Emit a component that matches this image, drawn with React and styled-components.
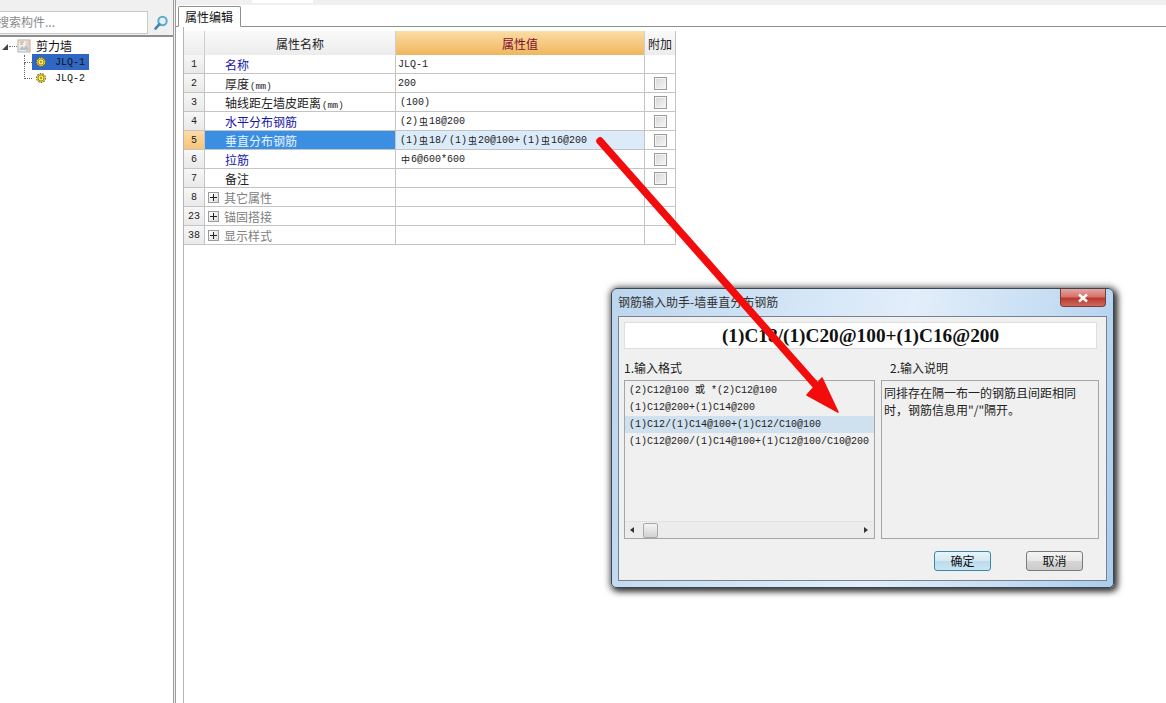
import React from "react";
import styled, { createGlobalStyle } from "styled-components";

const CJK = `"Noto Sans CJK SC", "Liberation Sans", sans-serif`;
const MONO = `"Liberation Mono", "Noto Sans CJK SC", monospace`;

const Global = createGlobalStyle`
  html, body { margin: 0; padding: 0; background: #fff; }
  body { font-family: ${CJK}; font-size: 12px; color: #111; }
  * { box-sizing: border-box; }
`;

const Page = styled.div`
  position: relative;
  display: flex;
  width: 1166px;
  height: 703px;
  overflow: hidden;
  background: #fff;
`;

/* ---------- left panel ---------- */
const LeftPanel = styled.aside`
  width: 173px;
  height: 100%;
  display: flex;
  flex-direction: column;
  flex: none;
`;
const SearchBar = styled.div`
  height: 37px;
  flex: none;
  display: flex;
  align-items: flex-start;
  padding-top: 11px;
  background: #f0f0f0;
  border-bottom: 2px solid #8e8e8e;
`;
const SearchInput = styled.div`
  width: 158px;
  height: 23px;
  margin-left: -10px;
  padding-left: 6px;
  flex: none;
  background: #fff;
  border: 1px solid #c9c9c9;
  color: #8a8a8a;
  font-size: 12px;
  line-height: 20px;
  white-space: nowrap;
`;
const SearchButton = styled.div`
  flex: 1;
  height: 23px;
  display: flex;
  align-items: center;
  justify-content: center;
  padding-left: 1px;
`;
const Tree = styled.div`
  padding-top: 1px;
`;
const RootNode = styled.div`
  height: 16px;
  display: flex;
  align-items: center;
  padding-left: 2px;
  font-size: 12px;
  line-height: 16px;
`;
const Expander = styled.span`
  width: 0;
  height: 0;
  margin-top: 1px;
  border-style: solid;
  border-width: 0 0 6px 6px;
  border-color: transparent transparent #444 transparent;
  flex: none;
`;
const RootDots = styled.span`
  width: 8px;
  margin: 1px 0 0 1px;
  border-top: 1px dotted #777;
  flex: none;
`;
const RootLabel = styled.span`
  margin-left: 4px;
  color: #111;
`;
const TreeChild = styled.div`
  height: 16px;
  display: flex;
  align-items: center;
  padding-left: 24px;
`;
const Elbow = styled.span`
  width: 8px;
  height: ${(p) => p.$h}px;
  margin-top: ${(p) => -p.$h + 1}px;
  border-left: 1px dotted #666;
  border-bottom: 1px dotted #666;
  flex: none;
`;
const ChildLabel = styled.span`
  width: 57px;
  height: 16px;
  display: flex;
  align-items: center;
  padding-left: 3px;
  gap: 8px;
  background: ${(p) => (p.$selected ? "#2f67c2" : "transparent")};
  font-family: ${MONO};
  font-size: 10px;
  color: #111;
`;

/* ---------- splitter + right ---------- */
const Splitter = styled.div`
  width: 3px;
  flex: none;
  background: #f0f0f0;
  border-left: 1px solid #9c9c9c;
  border-right: 1px solid #9c9c9c;
`;
const RightPanel = styled.main`
  flex: 1;
  display: flex;
  flex-direction: column;
  min-width: 0;
`;
const TopStrip = styled.div`
  height: 5px;
  flex: none;
  background: #f0f0f0;
  padding-left: 76px;
`;
const StripGap = styled.div`
  width: 61px;
  height: 3px;
  background: #fff;
`;
const TabBar = styled.div`
  height: 22px;
  flex: none;
  display: flex;
  align-items: flex-end;
  padding-left: 2px;
  border-bottom: 1px solid #8f8f8f;
`;
const Tab = styled.div`
  width: 63px;
  height: 21px;
  margin-bottom: -1px;
  background: #fff;
  border: 1px solid #8f8f8f;
  border-bottom: 1px solid #fff;
  border-radius: 2px 2px 0 0;
  font-size: 12px;
  line-height: 20px;
  padding-left: 6px;
  color: #111;
`;
const Pane = styled.div`
  flex: 1;
  margin-left: 7px;
  padding-top: 4px;
  border-left: 1px solid #b5b5b5;
`;
const Table = styled.div`
  width: 492px;
  border-right: 1px solid #c4c4c4;
`;
const cols = "20px 191px 249px 31px";
const HeaderRow = styled.div`
  display: grid;
  grid-template-columns: ${cols};
  height: 24px;
`;
const HeadCell = styled.div`
  display: flex;
  align-items: center;
  justify-content: center;
  font-size: 12px;
  border-left: ${(p) => (p.$first ? "none" : "1px solid #cfcfcf")};
  color: ${(p) => (p.$active ? "#7d0f32" : "#222")};
  background: ${(p) =>
    p.$active
      ? "linear-gradient(#fbdda4, #efb65e)"
      : "linear-gradient(#fafafa, #ececec)"};
`;
const Row = styled.div`
  display: grid;
  grid-template-columns: ${cols};
  height: 19px;
  border-bottom: 1px solid #c4c4c4;
`;
const NumCell = styled.div`
  display: flex;
  align-items: center;
  justify-content: center;
  font-family: ${MONO};
  font-size: 10px;
  color: #222;
  background: ${(p) =>
    p.$active ? "linear-gradient(#fcdba6, #f7c479)" : "linear-gradient(#f7f7f7, #e9e9e9)"};
`;
const NameCell = styled.div`
  display: flex;
  align-items: center;
  border-left: 1px solid #c4c4c4;
  padding-left: ${(p) => (p.$group ? "3px" : "20px")};
  gap: 5px;
  font-size: 12px;
  white-space: nowrap;
  background: ${(p) => (p.$active ? "#3a8fe3" : "#fff")};
  color: ${(p) =>
    p.$active ? "#eaf4ff" : p.$tone === "blue" ? "#1616a8" : p.$tone === "gray" ? "#808080" : "#222"};
`;
const Unit = styled.span`
  font-family: ${MONO};
  font-size: 9px;
  margin-left: 1px;
`;
const ValueCell = styled.div`
  display: flex;
  align-items: center;
  border-left: 1px solid #c4c4c4;
  padding-left: ${(p) => (p.$indent ? "4px" : "2px")};
  font-family: ${MONO};
  font-size: 10px;
  color: #222;
  white-space: pre;
  background: ${(p) => (p.$active ? "#dcebfa" : "#fff")};
`;
const Bar = styled.span`
  font-family: ${CJK};
  font-size: 9px;
  width: 11px;
  text-align: center;
`;
const Gap = styled.span`
  width: 2px;
`;
const ExtraCell = styled.div`
  display: flex;
  align-items: center;
  justify-content: center;
  border-left: 1px solid #c4c4c4;
  background: #fff;
`;
const Check = styled.span`
  width: 13px;
  height: 13px;
  border: 1px solid #9b9b9b;
  outline: 1px solid #f4f4f4;
  outline-offset: -2px;
  background: linear-gradient(135deg, #d6d6d6, #f7f7f7);
`;
const PlusBox = styled.span`
  position: relative;
  width: 11px;
  height: 11px;
  flex: none;
  margin-left: 0;
  border: 1px solid #9a9a9a;
  background: linear-gradient(135deg, #fff, #dcdcdc);
  &::before, &::after {
    content: "";
    position: absolute;
    background: #222;
  }
  &::before { left: 1px; right: 1px; top: 4px; height: 1px; }
  &::after { top: 1px; bottom: 1px; left: 4px; width: 1px; }
`;

/* ---------- dialog ---------- */
const Dialog = styled.section`
  position: absolute;
  left: 611px;
  top: 288px;
  width: 503px;
  height: 300px;
  padding: 27px 6px 6px;
  display: flex;
  flex-direction: column;
  border: 1px solid #3d4650;
  border-radius: 6px 6px 5px 5px;
  background: linear-gradient(100deg, #bcd6ee 0%, #d4e6f7 35%, #e2eefa 55%, #c6ddf3 80%, #a9cdee 100%);
  box-shadow: 1px 1px 7px 2px rgba(0, 0, 0, 0.6), 3px 3px 6px rgba(0, 0, 0, 0.55);
`;
const TitleText = styled.div`
  position: absolute;
  left: 6px;
  top: 4px;
  font-size: 12px;
  line-height: 17px;
  color: #333;
`;
const CloseButton = styled.div`
  position: absolute;
  right: 7px;
  top: 0;
  width: 46px;
  height: 18px;
  display: flex;
  align-items: center;
  justify-content: center;
  border: 1px solid #7d3a36;
  border-top: none;
  border-radius: 0 0 4px 4px;
  background: linear-gradient(#e5a79f 0%, #d6736b 45%, #b73a30 55%, #cf6a5c 100%);
`;
const DialogBody = styled.div`
  flex: 1;
  display: flex;
  flex-direction: column;
  padding: 5px 7px 0 5px;
  background: #f0f0f0;
  border: 1px solid #77828e;
`;
const Formula = styled.div`
  height: 27px;
  flex: none;
  margin-right: 2px;
  display: flex;
  align-items: center;
  justify-content: center;
  background: #fff;
  border: 1px solid #dfdfdf;
  font-family: "Liberation Serif", serif;
  font-weight: bold;
  font-size: 19.3px;
  color: #111;
`;
const Labels = styled.div`
  display: flex;
  height: 31px;
  flex: none;
  align-items: flex-end;
  padding-bottom: 4px;
  font-size: 12px;
  line-height: 16px;
  color: #222;
`;
const LabelA = styled.span`
  width: 266px;
`;
const Panels = styled.div`
  display: flex;
  gap: 6px;
  height: 159px;
  flex: none;
`;
const ListBox = styled.div`
  width: 251px;
  display: flex;
  flex-direction: column;
  border: 1px solid #a6a6a6;
  padding-top: 1px;
`;
const ListItems = styled.div`
  flex: 1;
`;
const ListItem = styled.div`
  height: 17px;
  padding-left: 4px;
  font-family: ${MONO};
  font-size: 10px;
  line-height: 17px;
  color: #222;
  white-space: pre;
  background: ${(p) => (p.$selected ? "#cfe0ef" : "transparent")};
`;
const HScroll = styled.div`
  height: 17px;
  flex: none;
  display: flex;
  align-items: center;
  justify-content: space-between;
  padding: 0 6px 0 5px;
  background: #ececec;
  border-top: 1px solid #e2e2e2;
`;
const ArrowLeft = styled.span`
  width: 0;
  height: 0;
  border-style: solid;
  border-width: 3px 4px 3px 0;
  border-color: transparent #333 transparent transparent;
`;
const ArrowRight = styled.span`
  width: 0;
  height: 0;
  border-style: solid;
  border-width: 3px 0 3px 4px;
  border-color: transparent transparent transparent #333;
`;
const Thumb = styled.span`
  width: 15px;
  height: 15px;
  margin-left: 9px;
  margin-right: auto;
  border: 1px solid #a9a9a9;
  border-radius: 2px;
  background: linear-gradient(#f4f4f4, #d2d2d2);
`;
const NoteBox = styled.div`
  width: 218px;
  padding: 3px 10px 0 2px;
  border: 1px solid #a6a6a6;
  font-size: 12px;
  line-height: 17px;
  color: #222;
`;
const Footer = styled.div`
  flex: 1;
  display: flex;
  justify-content: flex-end;
  align-items: flex-start;
  gap: 35px;
  padding: 12px 16px 0 0;
`;
const Button = styled.button`
  width: 57px;
  height: 20px;
  padding: 0;
  font-family: ${CJK};
  font-size: 12px;
  line-height: 16px;
  color: #111;
  border-radius: 3px;
  border: 1px solid ${(p) => (p.$primary ? "#3a87a8" : "#7a7a7a")};
  background: ${(p) =>
    p.$primary
      ? "linear-gradient(#e8f4fa 0%, #d4e8f3 48%, #bcdcec 52%, #c9e4f2 100%)"
      : "linear-gradient(#f4f4f4 0%, #e8e8e8 48%, #d6d6d6 52%, #cbcbcb 100%)"};
`;
const Overlay = styled.svg`
  position: absolute;
  left: 0;
  top: 0;
  pointer-events: none;
`;

const SearchIcon = () => (
  <svg width="16" height="16" viewBox="0 0 16 16">
    <circle cx="9.5" cy="6" r="4.2" fill="#dff1fa" stroke="#5fa8cc" strokeWidth="2" />
    <path d="M6.5 9.2 2.5 13.6" stroke="#3f86ad" strokeWidth="2.6" strokeLinecap="round" />
  </svg>
);
const WallIcon = () => (
  <svg width="15" height="14" viewBox="0 0 15 14" style={{ flex: "none" }}>
    <rect x="1" y="1" width="12" height="12" fill="#f2ede6" stroke="#b9ada0" />
    <path d="M2 11 5 7l2 2 2-3 3 5z" fill="#a9c2df" />
    <path d="M9 2h4v11H9" fill="#d9b9a2" opacity=".55" />
    <path d="M3 3h4M3 5h3" stroke="#c9a08a" />
  </svg>
);
const GearIcon = () => (
  <svg width="12" height="12" viewBox="0 0 12 12" style={{ flex: "none" }}>
    <circle cx="6" cy="6" r="4.4" fill="#f7e14a" stroke="#6b6420" strokeWidth="1.1" strokeDasharray="1.6 1.1" />
    <circle cx="6" cy="6" r="3" fill="#fff06a" stroke="#8a7a18" strokeWidth=".8" />
    <circle cx="6" cy="6" r="1.2" fill="#b89a20" />
  </svg>
);

const rows = [
  { n: "1", name: "名称", tone: "blue", value: "JLQ-1" },
  { n: "2", name: "厚度", unit: "(mm)", value: "200", check: true },
  { n: "3", name: "轴线距左墙皮距离", unit: "(mm)", indent: true, value: "(100)", check: true },
  { n: "4", name: "水平分布钢筋", tone: "blue", indent: true, value: <>(2)<Bar>虫</Bar>18@200</>, check: true },
  {
    n: "5",
    name: "垂直分布钢筋",
    active: true,
    indent: true,
    value: <>(1)<Bar>虫</Bar>18/<Gap />(1)<Bar>虫</Bar>20@100+<Gap />(1)<Bar>虫</Bar>16@200</>,
    check: true,
  },
  { n: "6", name: "拉筋", tone: "blue", indent: true, value: <><Bar>中</Bar>6@600*600</>, check: true },
  { n: "7", name: "备注", value: "", check: true },
  { n: "8", name: "其它属性", tone: "gray", group: true, value: "" },
  { n: "23", name: "锚固搭接", tone: "gray", group: true, value: "" },
  { n: "38", name: "显示样式", tone: "gray", group: true, value: "" },
];

const formats = [
  "(2)C12@100 或 *(2)C12@100",
  "(1)C12@200+(1)C14@200",
  "(1)C12/(1)C14@100+(1)C12/C10@100",
  "(1)C12@200/(1)C14@100+(1)C12@100/C10@200",
];

export default function App() {
  return (
    <Page>
      <Global />
      <LeftPanel>
        <SearchBar>
          <SearchInput>搜索构件...</SearchInput>
          <SearchButton>
            <SearchIcon />
          </SearchButton>
        </SearchBar>
        <Tree>
          <RootNode>
            <Expander />
            <RootDots />
            <WallIcon />
            <RootLabel>剪力墙</RootLabel>
          </RootNode>
          <TreeChild>
            <Elbow $h={8} />
            <ChildLabel $selected>
              <GearIcon />
              JLQ-1
            </ChildLabel>
          </TreeChild>
          <TreeChild>
            <Elbow $h={16} />
            <ChildLabel>
              <GearIcon />
              JLQ-2
            </ChildLabel>
          </TreeChild>
        </Tree>
      </LeftPanel>
      <Splitter />
      <RightPanel>
        <TopStrip>
          <StripGap />
        </TopStrip>
        <TabBar>
          <Tab>属性编辑</Tab>
        </TabBar>
        <Pane>
          <Table>
            <HeaderRow>
              <HeadCell $first />
              <HeadCell>属性名称</HeadCell>
              <HeadCell $active>属性值</HeadCell>
              <HeadCell>附加</HeadCell>
            </HeaderRow>
            {rows.map((r) => (
              <Row key={r.n}>
                <NumCell $active={r.active}>{r.n}</NumCell>
                <NameCell $active={r.active} $tone={r.tone} $group={r.group}>
                  {r.group && <PlusBox />}
                  <span>
                    {r.name}
                    {r.unit && <Unit>{r.unit}</Unit>}
                  </span>
                </NameCell>
                <ValueCell $active={r.active} $indent={r.indent}>{r.value}</ValueCell>
                <ExtraCell>{r.check && <Check />}</ExtraCell>
              </Row>
            ))}
          </Table>
        </Pane>
      </RightPanel>

      <Dialog>
        <TitleText>钢筋输入助手-墙垂直分布钢筋</TitleText>
        <CloseButton>
          <svg width="12" height="10" viewBox="0 0 12 10">
            <path d="M2 1.5 10 8.5M10 1.5 2 8.5" stroke="#fff" strokeWidth="2.4" />
          </svg>
        </CloseButton>
        <DialogBody>
          <Formula>(1)C18/(1)C20@100+(1)C16@200</Formula>
          <Labels>
            <LabelA>1.输入格式</LabelA>
            <span>2.输入说明</span>
          </Labels>
          <Panels>
            <ListBox>
              <ListItems>
                {formats.map((f, i) => (
                  <ListItem key={f} $selected={i === 2}>
                    {f}
                  </ListItem>
                ))}
              </ListItems>
              <HScroll>
                <ArrowLeft />
                <Thumb />
                <ArrowRight />
              </HScroll>
            </ListBox>
            <NoteBox>同排存在隔一布一的钢筋且间距相同时，钢筋信息用"/"隔开。</NoteBox>
          </Panels>
          <Footer>
            <Button $primary>确定</Button>
            <Button>取消</Button>
          </Footer>
        </DialogBody>
      </Dialog>

      <Overlay width="1166" height="703" viewBox="0 0 1166 703">
        <path d="M600 141 820 390" stroke="#f20c0c" strokeWidth="7.5" strokeLinecap="round" />
        <polygon points="838,412 807,395 822,378" fill="#f20c0c" stroke="#f20c0c" strokeWidth="1.5" strokeLinejoin="round" />
      </Overlay>
    </Page>
  );
}
